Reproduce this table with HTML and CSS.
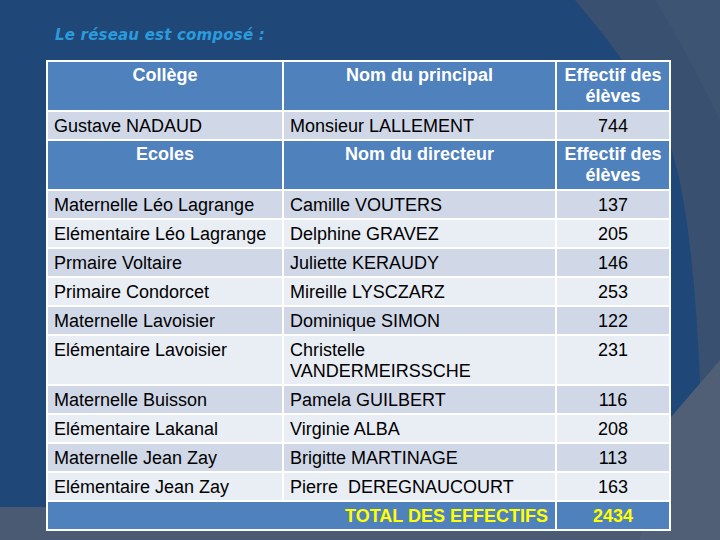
FILE: index.html
```html
<!DOCTYPE html>
<html lang="fr">
<head>
<meta charset="utf-8">
<title>Le réseau</title>
<link rel="stylesheet" href="styles.css">
</head>
<body>
<div class="slide">
  <svg class="bg" width="720" height="540" viewBox="0 0 720 540" aria-hidden="true">
    <rect width="720" height="540" fill="#1f4879"/>
    <path d="M575,0 C600,30 625,60 655,110 C690,170 700,300 705,540 L720,540 L720,0 Z" fill="#3a5071"/>
    <path d="M655,0 C680,40 700,80 720,120 L720,0 Z" fill="#3e5473"/>
    <path d="M0,507 L60,507 L720,420 L720,540 L0,540 Z" fill="#4a5a73"/>
    <path d="M660,430 L720,360 L720,540 L640,540 Z" fill="#505f76"/>
  </svg>
  <div class="content">
    <h1 class="title">Le réseau est composé :</h1>
    <table class="grid">
      <colgroup>
        <col class="c1"><col class="c2"><col class="c3">
      </colgroup>
      <tr class="head">
        <th>Collège</th><th>Nom du principal</th><th>Effectif des élèves</th>
      </tr>
      <tr class="odd">
        <td>Gustave NADAUD</td><td>Monsieur LALLEMENT</td><td class="num">744</td>
      </tr>
      <tr class="head">
        <th>Ecoles</th><th>Nom du directeur</th><th>Effectif des élèves</th>
      </tr>
      <tr class="odd"><td>Maternelle Léo Lagrange</td><td>Camille VOUTERS</td><td class="num">137</td></tr>
      <tr class="even"><td>Elémentaire Léo Lagrange</td><td>Delphine GRAVEZ</td><td class="num">205</td></tr>
      <tr class="odd"><td>Prmaire Voltaire</td><td>Juliette KERAUDY</td><td class="num">146</td></tr>
      <tr class="even"><td>Primaire Condorcet</td><td>Mireille LYSCZARZ</td><td class="num">253</td></tr>
      <tr class="odd"><td>Maternelle Lavoisier</td><td>Dominique SIMON</td><td class="num">122</td></tr>
      <tr class="even"><td>Elémentaire Lavoisier</td><td>Christelle<br>VANDERMEIRSSCHE</td><td class="num">231</td></tr>
      <tr class="odd"><td>Maternelle Buisson</td><td>Pamela GUILBERT</td><td class="num">116</td></tr>
      <tr class="even"><td>Elémentaire Lakanal</td><td>Virginie ALBA</td><td class="num">208</td></tr>
      <tr class="odd"><td>Maternelle Jean Zay</td><td>Brigitte MARTINAGE</td><td class="num">113</td></tr>
      <tr class="even"><td>Elémentaire Jean Zay</td><td>Pierre&nbsp; DEREGNAUCOURT</td><td class="num">163</td></tr>
      <tr class="total">
        <td colspan="2" class="total-label">TOTAL DES EFFECTIFS</td><td class="num">2434</td>
      </tr>
    </table>
  </div>
</div>
</body>
</html>
```
FILE: styles.css
```css
html, body {
  margin: 0;
  padding: 0;
}
body {
  width: 720px;
  height: 540px;
  overflow: hidden;
  background: #1f4879;
}
.slide {
  position: relative;
  width: 720px;
  height: 540px;
  overflow: hidden;
}
.bg {
  position: absolute;
  left: 0;
  top: 0;
}
.content {
  position: relative;
  padding: 25px 0 0 46px;
}
.title {
  margin: 0 0 15px 9px;
  font-family: "DejaVu Sans", sans-serif;
  font-style: italic;
  font-weight: bold;
  font-size: 15px;
  line-height: 20px;
  color: #2b9bdb;
  letter-spacing: 0.2px;
}
.grid {
  border-collapse: separate;
  border-spacing: 2px 2px;
  background: #ffffff;
  font-family: "Liberation Sans", Arial, sans-serif;
  font-size: 18px;
  line-height: 21px;
  color: #000;
  table-layout: fixed;
  width: 625px;
}
.c1 { width: 234px; }
.c2 { width: 271px; }
.c3 { width: 112px; }
.grid th, .grid td {
  padding: 4px 6px 2px 6px;
  vertical-align: top;
  text-align: left;
}
.grid th {
  padding: 3px 6px 3px 6px;
  background: #4f81bd;
  color: #ffffff;
  font-weight: bold;
  text-align: center;
}
.odd td { background: #d0d8e8; }
.even td { background: #e9edf4; }
.grid td.num { text-align: center; }
.total td {
  background: #4f81bd;
  color: #ffff00;
  font-weight: bold;
}
.total td.total-label {
  text-align: right;
  padding-right: 7px;
}
```
